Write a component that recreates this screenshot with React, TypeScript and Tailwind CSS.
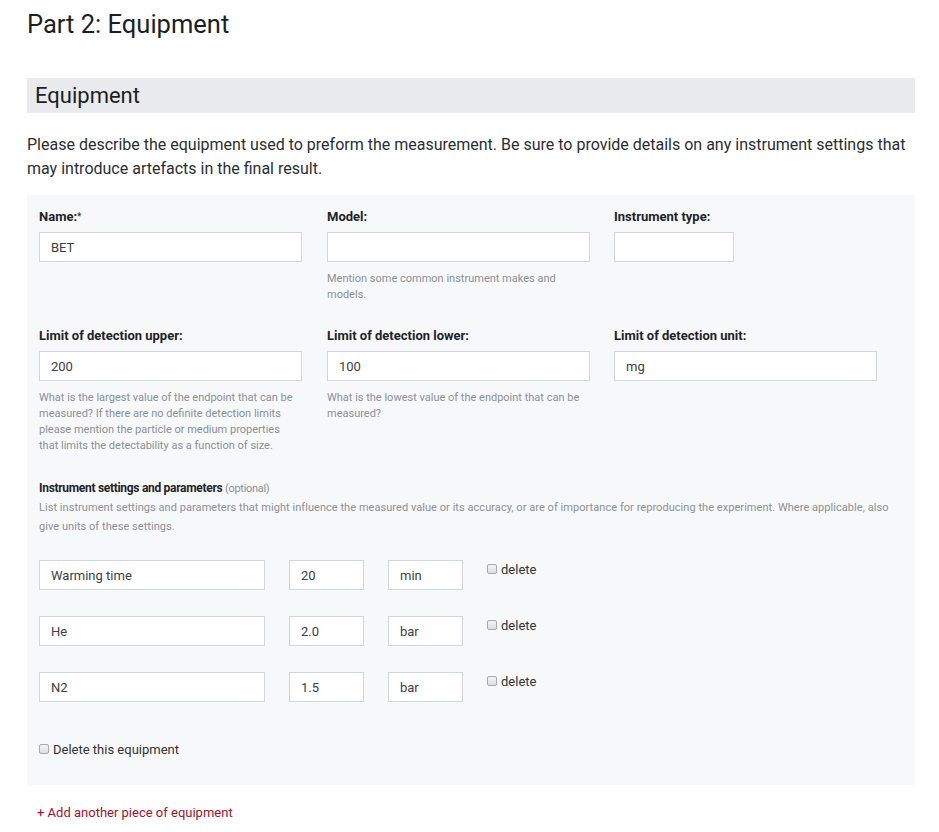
import React from 'react';

const inputCls =
  'h-[30px] border border-[#d2d5d9] bg-white px-[11px] text-[13px] text-[#3b4046] outline-none';

function Field({
  label,
  value = '',
  help,
  required,
  width = 'w-[263px]',
}: {
  label: string;
  value?: string;
  help?: React.ReactNode;
  required?: boolean;
  width?: string;
}) {
  return (
    <div className="flex flex-col">
      <label className="text-[13px] font-bold text-[#1f2328] leading-[20px] h-[20px]">
        {label}
        {required && <sup className="font-normal text-[10px] relative -top-[1px]">*</sup>}
      </label>
      <input className={`${inputCls} ${width} mt-[5px]`} defaultValue={value} readOnly />
      {help && <p className="mt-[9px] text-[11px] leading-[16px] text-[#8b9096] w-[258px]">{help}</p>}
    </div>
  );
}

function Check({ label }: { label: string }) {
  return (
    <label className="flex items-start gap-[4px] text-[13px] text-[#333] leading-[18px]">
      <input
        type="checkbox"
        className="appearance-none mt-[3px] w-[10px] h-[10px] border border-[#a9a9a9] rounded-[2px] bg-gradient-to-b from-[#f4f4f4] to-[#dedede]"
      />
      {label}
    </label>
  );
}

function ParamRow({ name, val, unit }: { name: string; val: string; unit: string }) {
  return (
    <div className="flex items-start">
      <input className={`${inputCls} w-[226px]`} defaultValue={name} readOnly />
      <input className={`${inputCls} w-[75px] ml-[24px]`} defaultValue={val} readOnly />
      <input className={`${inputCls} w-[75px] ml-[24px]`} defaultValue={unit} readOnly />
      <div className="ml-[24px] mt-[1px]">
        <Check label="delete" />
      </div>
    </div>
  );
}

export default function App() {
  return (
    <div className="bg-white min-h-[832px] pl-[27px] pr-[24px] pt-[6px] font-['Roboto',sans-serif] text-[#212529]">
      <h1 className="text-[25.5px] leading-[36px] text-[#1b1f24]">Part 2: Equipment</h1>

      <div className="mt-[36px] bg-[#e8eaed] h-[35px] px-[8px] flex items-center">
        <h2 className="text-[22px] text-[#1b1f24]">Equipment</h2>
      </div>

      <p className="mt-[20px] text-[16px] leading-[24px] text-[#2a2e33]">
        Please describe the equipment used to preform the measurement. Be sure to provide details on any instrument settings that may introduce artefacts in the final result.
      </p>

      <div className="mt-[14px] bg-[#f7f8fa] px-[12px] pt-[12px] pb-[26px]">
        <div className="grid grid-cols-[288px_287px_263px]">
          <Field label="Name:" required value="BET" />
          <Field label="Model:" help="Mention some common instrument makes and models." />
          <Field label="Instrument type:" width="w-[120px]" />
        </div>

        <div className="grid grid-cols-[288px_287px_263px] mt-[23px]">
          <Field
            label="Limit of detection upper:"
            value="200"
            help="What is the largest value of the endpoint that can be measured? If there are no definite detection limits please mention the particle or medium properties that limits the detectability as a function of size."
          />
          <Field
            label="Limit of detection lower:"
            value="100"
            help="What is the lowest value of the endpoint that can be measured?"
          />
          <Field label="Limit of detection unit:" value="mg" />
        </div>

        <div className="mt-[25px]">
          <div className="text-[12px] leading-[18px] tracking-[-0.3px]">
            <span className="font-bold text-[#1f2328]">Instrument settings and parameters</span>{' '}
            <span className="text-[11px] text-[#8b9096]">(optional)</span>
          </div>
          <p className="text-[11px] leading-[19px] text-[#8b9096] tracking-[0.05px]">
            List instrument settings and parameters that might influence the measured value or its accuracy, or are of importance for reproducing the experiment. Where applicable, also give units of these settings.
          </p>
        </div>

        <div className="mt-[24px] flex flex-col gap-[26px]">
          <ParamRow name="Warming time" val="20" unit="min" />
          <ParamRow name="He" val="2.0" unit="bar" />
          <ParamRow name="N2" val="1.5" unit="bar" />
        </div>

        <div className="mt-[39px]">
          <Check label="Delete this equipment" />
        </div>
      </div>

      <a href="#" className="block mt-[18px] ml-[10px] text-[13px] text-[#a4102c]">
        + Add another piece of equipment
      </a>
    </div>
  );
}
